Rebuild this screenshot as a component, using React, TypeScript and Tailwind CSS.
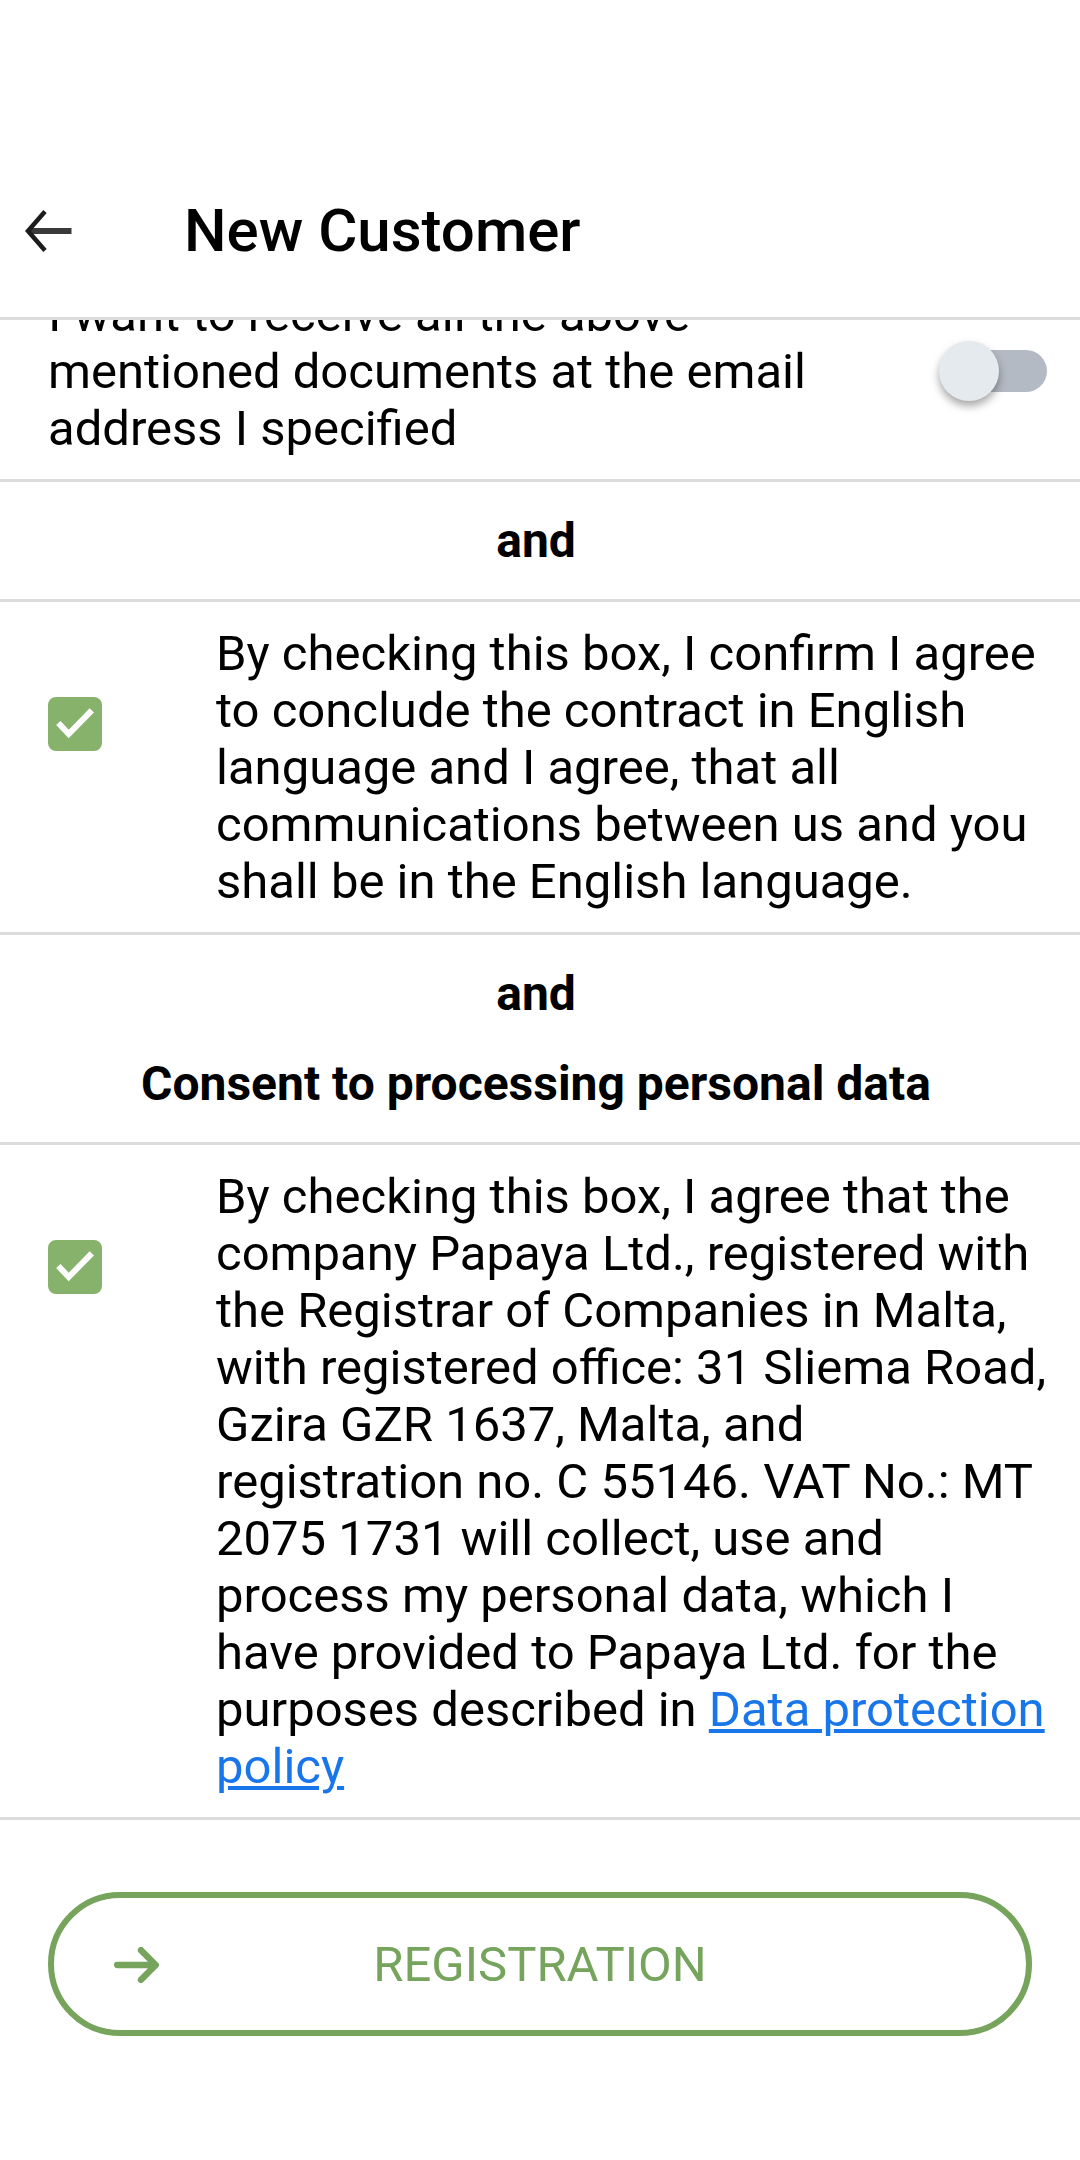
import { ReactNode } from 'react';

function Divider({ children, className }: { children: ReactNode; className: string }) {
  return <section className={'border-b-3 border-[#dcdcdc] ' + className}>{children}</section>;
}

function Consent({ id, children }: { id: string; children: ReactNode }) {
  return (
    <div className="flex items-start pl-12 pr-8">
      <span className="relative mt-18 mr-[114px] size-[54px] shrink-0">
        <input id={id} type="checkbox" defaultChecked className="peer block size-full appearance-none rounded-lg border-4 border-[#87b26c] checked:bg-[#87b26c]" />
        <svg viewBox="0 0 54 54" className="pointer-events-none absolute inset-0 hidden size-full peer-checked:block" fill="none" stroke="white" strokeWidth="6">
          <path d="M10.3 26 20.7 37 43.8 13.3" />
        </svg>
      </span>
      <label htmlFor={id} className="flex-1">{children}</label>
    </div>
  );
}

export default function App() {
  return (
    <div className="flex min-h-screen flex-col bg-white font-['Roboto',sans-serif] text-[49px] leading-[57px] text-black">
      <header className="flex items-center border-b-3 border-[#dcdcdc] pt-[144px]">
        <button aria-label="Back" className="ml-6 flex h-[173px] w-12 items-center">
          <svg viewBox="0 0 48 44" className="h-11 w-12" fill="none">
            <path d="M47.5 22H4" stroke="#3a3a3a" strokeWidth="6" />
            <path d="M21 2.5 4 22l17 19.5" stroke="#1c1c1c" strokeWidth="4.5" />
          </svg>
        </button>
        <h1 className="ml-28 text-[60px] font-medium">New Customer</h1>
      </header>
      <main className="flex flex-col">
        <Divider className="flex items-start justify-between overflow-hidden pb-[22px] pl-12 pr-[33px]">
          <label htmlFor="mail" className="-mt-[34px] w-[780px]">I want to receive all the above mentioned documents at the email address I specified</label>
          <span className="relative mt-[21px] h-[60px] w-[108px]">
            <input id="mail" type="checkbox" role="switch" className="peer absolute top-[9px] right-0 h-[42px] w-[90px] appearance-none rounded-full bg-[#b3bac3]" />
            <span className="pointer-events-none absolute top-0 left-0 size-[60px] rounded-full bg-[#e5eaee] shadow-[0_5px_9px_rgba(0,0,0,0.35)] peer-checked:left-12" />
          </span>
        </Divider>
        <Divider className="py-[30px] pr-2 text-center text-[48px] font-bold">and</Divider>
        <Divider className="pt-[23px] pb-[22px]">
          <Consent id="language">By checking this box, I confirm I agree to conclude the contract in English language and I agree, that all communications between us and you shall be in the English language.</Consent>
        </Divider>
        <Divider className="flex flex-col gap-[33px] py-[30px] pr-2 text-center text-[48px] font-bold">
          <p>and</p>
          <h2>Consent to processing personal data</h2>
        </Divider>
        <Divider className="pt-[23px] pb-[22px]">
          <Consent id="privacy">By checking this box, I agree that the company Papaya Ltd., registered with the Registrar of Companies in Malta, with registered office: 31 Sliema Road, Gzira GZR 1637, Malta, and registration no. C 55146. VAT No.: MT 2075 1731 will collect, use and process my personal data, which I have provided to Papaya Ltd. for the purposes described in <a href="#policy" className="text-[#1976ea] underline decoration-4 underline-offset-3">Data protection policy</a></Consent>
        </Divider>
      </main>
      <footer className="px-12 pt-[72px] pb-[124px]">
        <button className="relative h-[144px] w-full rounded-full border-6 border-[#76a45c] text-[#76a45c]">
          <svg viewBox="0 0 45 36" className="absolute top-[49px] left-[60px] h-9 w-[45px]" fill="none" stroke="currentColor" strokeWidth="6.5" strokeLinecap="round" strokeLinejoin="round">
            <path d="M3.2 18H41M27 3.2 41.7 18 27 32.8" />
          </svg>
          REGISTRATION
        </button>
      </footer>
    </div>
  );
}
